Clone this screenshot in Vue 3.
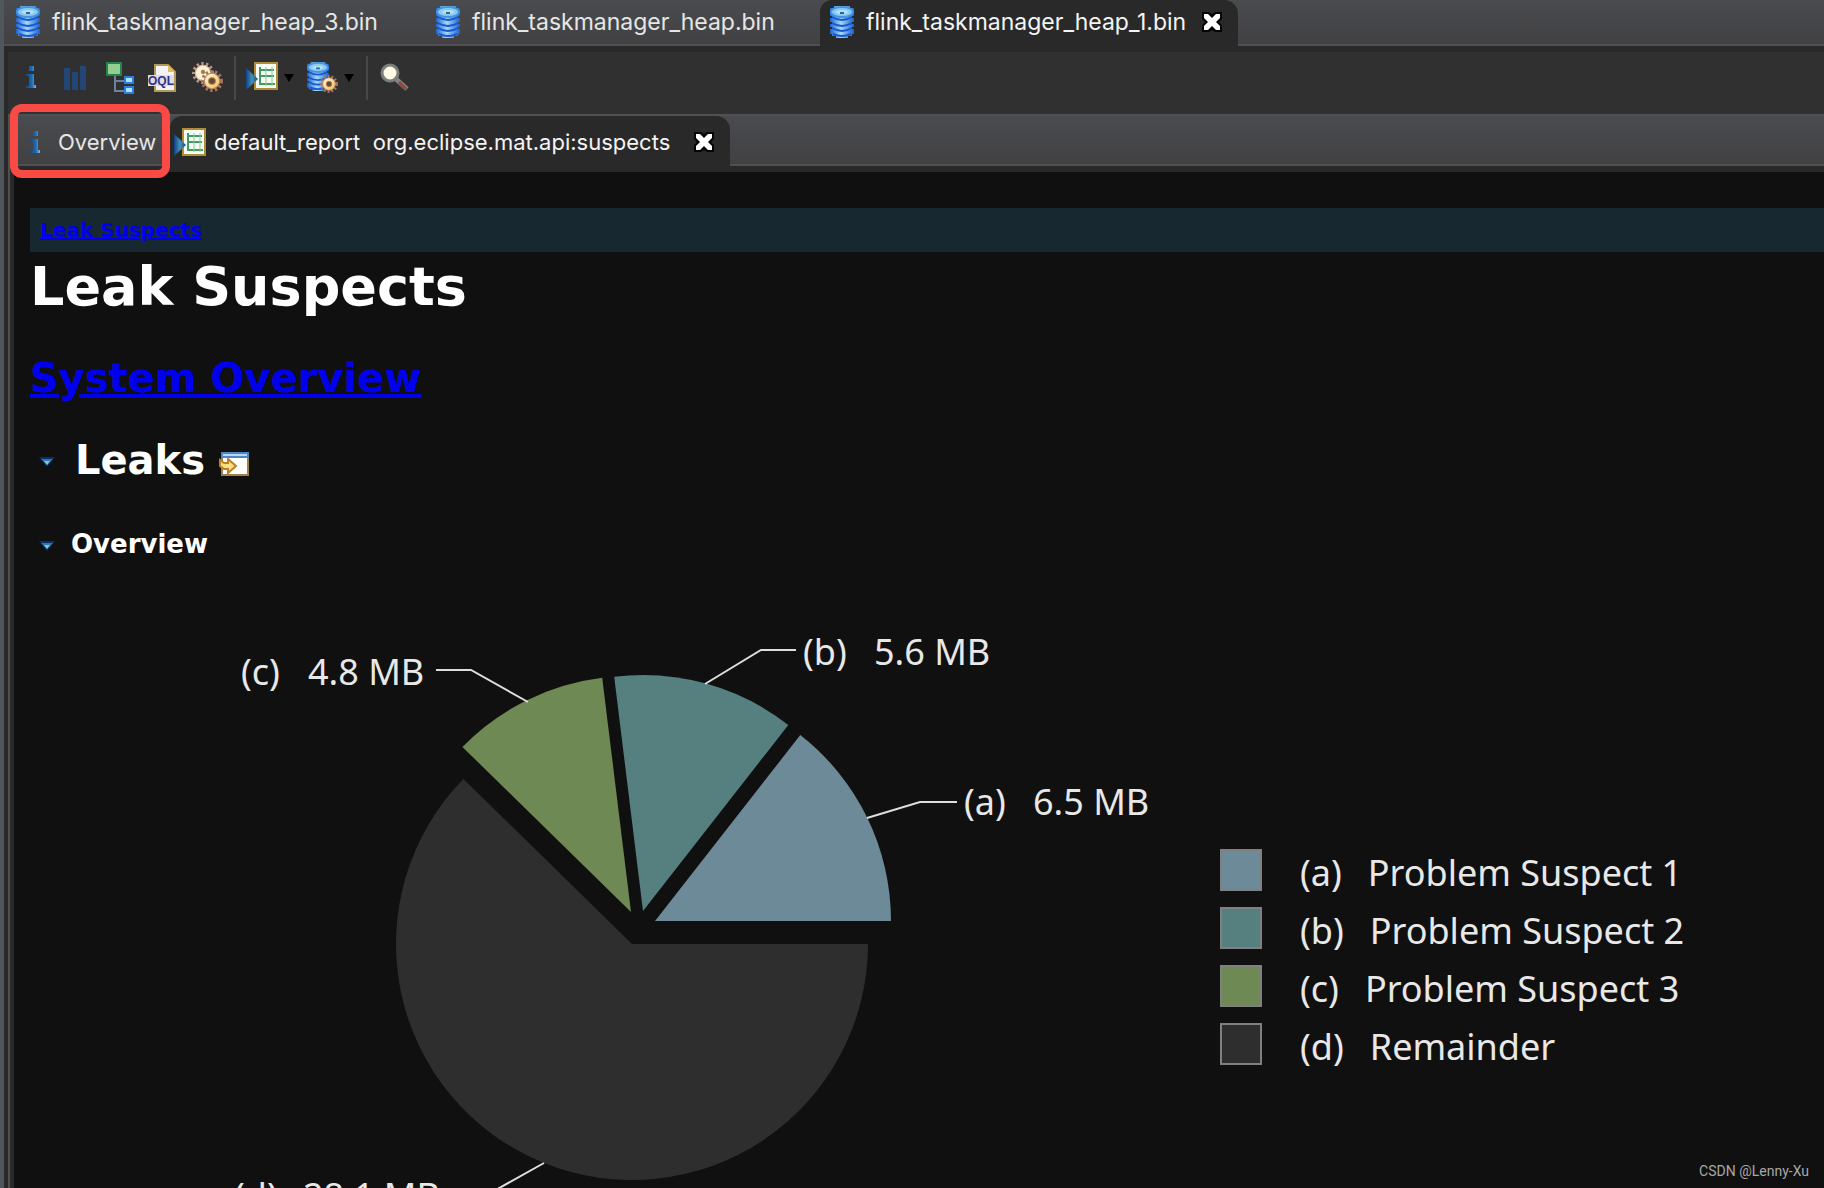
<script setup>
import { ref } from 'vue'

const editorTabs = [
  { title: 'flink_taskmanager_heap_3.bin', active: false },
  { title: 'flink_taskmanager_heap.bin', active: false },
  { title: 'flink_taskmanager_heap_1.bin', active: true },
]

const radius = 236

// Angles are in degrees, counter-clockwise from three o'clock.
const slices = [
  { key: '(a)', size: '6.5 MB', name: 'Problem Suspect 1', color: '#6c8a97', x: 625, y: 321, from: 0, to: 52, line: '837,218 890,202 927,202', kx: 934, vx: 1003, ty: 215 },
  { key: '(b)', size: '5.6 MB', name: 'Problem Suspect 2', color: '#568080', x: 613, y: 311, from: 52, to: 97, line: '675,84 731,50 766,50', kx: 773, vx: 844, ty: 65 },
  { key: '(c)', size: '4.8 MB', name: 'Problem Suspect 3', color: '#6f8955', x: 601, y: 312, from: 97, to: 135.6, line: '406,70 441,70 498,102', kx: 211, vx: 278, ty: 85 },
  { key: '(d)', size: '28.1 MB', name: 'Remainder', color: '#2e2e2e', x: 602, y: 344, from: 135.6, to: 360, line: '514,563 455,596 420,596', kx: 204, vx: 273, ty: 609 },
]

function slicePath(s) {
  const point = (deg) => {
    const a = (deg * Math.PI) / 180
    return `${(s.x + radius * Math.cos(a)).toFixed(1)} ${(s.y - radius * Math.sin(a)).toFixed(1)}`
  }
  const large = s.to - s.from > 180 ? 1 : 0
  return `M${s.x} ${s.y}L${point(s.from)}A${radius} ${radius} 0 ${large} 0 ${point(s.to)}Z`
}

const leaksOpen = ref(true)
const overviewOpen = ref(true)
</script>

<template>
  <div class="window">
    <svg class="defs" width="0" height="0" aria-hidden="true">
      <defs>
        <linearGradient id="dbBody" x1="0" x2="1">
          <stop offset="0" stop-color="#1c62cc" /><stop offset=".45" stop-color="#a5daf6" /><stop offset="1" stop-color="#1b5fd0" />
        </linearGradient>
        <linearGradient id="gold" x1="0" y1="0" x2="1" y2="1">
          <stop offset="0" stop-color="#fffbe0" /><stop offset="1" stop-color="#eebb62" />
        </linearGradient>
        <linearGradient id="play" x1="0" x2="1">
          <stop offset="0" stop-color="#0f3f86" /><stop offset=".5" stop-color="#4593b5" /><stop offset="1" stop-color="#0c4a94" />
        </linearGradient>
        <linearGradient id="info" x1="0" x2="1">
          <stop offset="0" stop-color="#0a4a90" /><stop offset=".6" stop-color="#1a6cb4" /><stop offset="1" stop-color="#8ab4dc" />
        </linearGradient>
        <symbol id="db" viewBox="0 0 24 32">
          <path d="M4 0H20V2H24V10H22V12H24V16H22V18H24V21H22V23H24V28H22V30H18V32H6V30H2V28H0V23H2V21H0V18H2V16H0V12H2V10H0V2H4Z" fill="url(#dbBody)" />
          <path d="M2 11Q12 17 22 11M2 17Q12 23 22 17M2 22Q12 28 22 22M3 28Q12 32 21 28" fill="none" stroke="#1557d6" stroke-width="2" />
          <ellipse cx="12" cy="6" rx="11" ry="5" fill="#8ccaf0" stroke="#4295de" stroke-width="2" />
          <ellipse cx="12" cy="6" rx="6" ry="2" fill="#b5e0f4" />
          <path d="M10 6H14V8H10Z" fill="#28679b" />
        </symbol>
        <symbol id="gear" viewBox="0 0 20 20">
          <circle cx="10" cy="10" r="8" fill="none" stroke="#a97558" stroke-width="4" stroke-dasharray="2 2" />
          <circle cx="10" cy="10" r="7" fill="url(#gold)" stroke="#b98a6a" stroke-width="1" />
          <circle cx="10" cy="10" r="3" fill="#5a4a42" stroke="#b87828" stroke-width="1" />
        </symbol>
        <symbol id="backGear" viewBox="0 0 20 20">
          <circle cx="10" cy="10" r="8" fill="none" stroke="#bb9480" stroke-width="4" stroke-dasharray="2 2" />
          <circle cx="10" cy="10" r="7" fill="#fbf1d4" stroke="#d2b49c" stroke-width="1" />
          <circle cx="10" cy="9" r="2" fill="#a5804f" />
        </symbol>
        <symbol id="report" viewBox="0 0 32 28">
          <path d="M9 1H31V27H9Z" fill="#f6fbf4" stroke="#b08b38" stroke-width="2" />
          <path d="M14 5V22H29M14 8H28M14 14H28" fill="none" stroke="#3d9c62" stroke-width="2" />
          <path d="M20 5V24M26 5V24" stroke="#8fc79e" stroke-width="1" />
          <path d="M0 6L12 17L0 28Z" fill="url(#play)" />
        </symbol>
        <symbol id="infoMark" viewBox="0 0 10 22">
          <path d="M3 0H8V5H3ZM0 8H8V19H10V22H0V20H3V10H0Z" fill="url(#info)" />
        </symbol>
        <symbol id="close" viewBox="0 0 20 20">
          <path d="M0 0H7L10 2L13 0H20V7L17 10L20 13V20H13L10 18L7 20H0V13L3 10L0 7Z" fill="#050505" />
          <path d="M2 2H6L10 6L14 2H18V6L14 10L18 14V18H14L10 14L6 18H2V14L6 10L2 6Z" fill="#fff" />
        </symbol>
        <symbol id="twisty" viewBox="0 0 16 10">
          <path d="M0 0H16L8 10Z" fill="#06306c" /><path d="M2 2H14L8 8Z" fill="#2f7aa8" /><path d="M5 4H11L8 8Z" fill="#8ac4d0" />
        </symbol>
      </defs>
    </svg>

    <nav class="editor-tabs" aria-label="Editors">
      <div v-for="tab in editorTabs" :key="tab.title" class="editor-tab" :class="{ active: tab.active }">
        <button class="tab-title" type="button">
          <svg width="24" height="32"><use href="#db" /></svg>
          <span>{{ tab.title }}</span>
        </button>
        <button v-if="tab.active" class="close" type="button" aria-label="Close editor">
          <svg width="20" height="20"><use href="#close" /></svg>
        </button>
      </div>
    </nav>

    <div class="toolbar" role="toolbar">
      <div class="group">
        <button type="button" aria-label="Overview">
          <svg width="32" height="32"><use href="#infoMark" x="10" y="4" width="10" height="22" /></svg>
        </button>
        <button type="button" aria-label="Histogram">
          <svg width="32" height="32"><path d="M4 6h6v22H4zM12 10h6v18h-6zM20 4h6v24h-6z" fill="#234674" /></svg>
        </button>
        <button type="button" aria-label="Dominator tree">
          <svg width="32" height="32">
            <path d="M11 14V29H20M11 19H20" fill="none" stroke="#6e829e" stroke-width="2" />
            <path d="M3 1H17V13H3Z" fill="#93cf8f" stroke="#26834f" stroke-width="2" />
            <path d="M20 14H30V22H20ZM20 24H30V32H20Z" fill="#2c7de0" />
            <path d="M22 16H28V20H22ZM22 26H28V30H22Z" fill="#a8e4fc" />
          </svg>
        </button>
        <button type="button" aria-label="Object query language">
          <svg width="32" height="32">
            <path d="M7 3H20L27 10V29H7Z" fill="#f2f3f6" stroke="#b29a55" stroke-width="2" />
            <path d="M20 3V10H27Z" fill="#e5b95c" />
            <path d="M0 13H26V24H0Z" fill="#dcdde9" />
            <text class="oql" x="0" y="23">OQL</text>
          </svg>
        </button>
        <button type="button" aria-label="Thread overview">
          <svg width="32" height="32">
            <use href="#backGear" x="0" y="0" width="22" height="22" /><use href="#gear" x="9" y="8" width="22" height="22" />
          </svg>
        </button>
      </div>
      <div class="group split">
        <button type="button" aria-label="Run report">
          <svg width="32" height="32"><use href="#report" y="0" width="32" height="28" /></svg>
        </button>
        <button class="drop" type="button" aria-label="Report list">
          <svg width="10" height="8"><path d="M0 0H10L5 8Z" fill="#000" /></svg>
        </button>
        <button type="button" aria-label="Query browser">
          <svg width="32" height="32">
            <use href="#db" width="24" height="29" /><use href="#gear" x="14" y="13" width="18" height="18" />
          </svg>
        </button>
        <button class="drop" type="button" aria-label="Query list">
          <svg width="10" height="8"><path d="M0 0H10L5 8Z" fill="#000" /></svg>
        </button>
      </div>
      <div class="group">
        <button type="button" aria-label="Find object">
          <svg width="32" height="32">
            <path d="M16 17L27 27" stroke="#85808a" stroke-width="5" />
            <path d="M19 20L26 27" stroke="#8d4a34" stroke-width="3" />
            <circle cx="10" cy="11" r="8" fill="#fdfbe6" stroke="#7c7f78" stroke-width="3" />
          </svg>
        </button>
      </div>
    </div>

    <div class="pane">
      <nav class="page-tabs" aria-label="Pages">
        <div class="page-tab overview">
          <button class="tab-title" type="button">
            <svg width="10" height="22"><use href="#infoMark" /></svg>
            <span>Overview</span>
          </button>
          <span class="highlight"></span>
        </div>
        <div class="page-tab active">
          <button class="tab-title" type="button">
            <svg width="32" height="28"><use href="#report" /></svg>
            <span>default_report&nbsp; org.eclipse.mat.api:suspects</span>
          </button>
          <button class="close" type="button" aria-label="Close page">
            <svg width="20" height="20"><use href="#close" /></svg>
          </button>
        </div>
      </nav>

      <main class="report">
        <div class="crumbs"><a href="#leaks">Leak Suspects</a></div>
        <h1>Leak Suspects</h1>
        <h2><a href="#system">System Overview</a></h2>
        <h2 id="leaks" class="section">
          <button type="button" aria-label="Toggle leaks" :aria-expanded="leaksOpen" @click="leaksOpen = !leaksOpen">
            <svg width="16" height="10"><use href="#twisty" /></svg>
          </button>
          <span>Leaks</span>
          <a class="open" href="#window" aria-label="Open in window">
            <svg width="30" height="24">
              <path d="M3 1H29V23H3Z" fill="#fff" stroke="#9b8050" stroke-width="2" />
              <path d="M2 0H30V6H2Z" fill="#4c86c6" /><path d="M4 2H28V4H4Z" fill="#b8d8f2" />
              <path d="M1 8L5 11H9V7L17 14L9 21V17H5L1 14Z" fill="#f9df83" stroke="#bc8226" stroke-width="2" />
            </svg>
          </a>
        </h2>
        <template v-if="leaksOpen">
          <h3 class="section">
            <button type="button" aria-label="Toggle overview" :aria-expanded="overviewOpen" @click="overviewOpen = !overviewOpen">
              <svg width="16" height="10"><use href="#twisty" /></svg>
            </button>
            <span>Overview</span>
          </h3>
          <figure v-if="overviewOpen" class="chart">
            <svg class="pie" width="1190" height="640" viewBox="0 0 1190 640">
              <g v-for="s in slices" :key="s.key">
                <path :d="slicePath(s)" :fill="s.color" />
                <polyline :points="s.line" fill="none" stroke="#dedede" stroke-width="2" />
                <text :x="s.kx" :y="s.ty">{{ s.key }}</text>
                <text :x="s.vx" :y="s.ty">{{ s.size }}</text>
              </g>
            </svg>
            <ul class="legend">
              <li v-for="s in slices" :key="s.key">
                <span class="swatch" :style="{ background: s.color }"></span>
                <span class="key">{{ s.key }}</span>
                <span class="name">{{ s.name }}</span>
              </li>
            </ul>
          </figure>
        </template>
      </main>
    </div>
    <span class="watermark">CSDN @Lenny-Xu</span>
  </div>
</template>

<style>
body {
  margin: 0;
  background: #101010;
}
</style>

<style scoped>
.window {
  position: relative;
  display: flex;
  flex-direction: column;
  box-sizing: border-box;
  height: 100vh;
  overflow: hidden;
  border-left: 4px solid #50575c;
  background: #292929;
  color: #e6e6e6;
  font-family: Inter, "Liberation Sans", sans-serif;
  font-size: 22px;
}
.defs {
  position: absolute;
}
button {
  display: flex;
  align-items: center;
  padding: 0;
  border: 0;
  background: none;
  color: inherit;
  font: inherit;
}
svg {
  display: block;
  flex: none;
}
.editor-tabs,
.page-tabs {
  display: flex;
  flex: none;
  box-sizing: border-box;
  background: linear-gradient(#4a4b4e, #414144);
}
.editor-tabs {
  height: 46px;
  border-bottom: 2px solid #505052;
  font-size: 23px;
}
.editor-tab {
  display: flex;
  box-sizing: border-box;
  flex: none;
  align-items: center;
  width: 420px;
  height: 44px;
  padding-left: 12px;
}
.editor-tab + .editor-tab {
  width: 396px;
}
.editor-tab + .editor-tab.active {
  width: 418px;
  height: 46px;
  padding: 0 16px 2px 10px;
  justify-content: space-between;
}
.active {
  border-radius: 12px 14px 0 0;
  background: #292929;
  color: #f4f4f4;
}
.tab-title {
  gap: 12px;
  white-space: nowrap;
}
.toolbar {
  display: flex;
  flex: none;
  margin: 6px 0 0 4px;
  padding: 4px 8px 14px;
  background: #303030;
}
.group {
  display: flex;
  align-items: center;
  gap: 12px;
  height: 44px;
}
.group.split {
  gap: 6px;
  margin: 0 12px 0 10px;
  padding: 0 12px 0 10px;
  border-left: 2px solid #484848;
  border-right: 2px solid #484848;
}
.drop {
  margin-right: 6px;
}
.drop:last-child {
  margin-right: 0;
}
.oql {
  fill: #38307e;
  font-family: "Liberation Sans", Arial, sans-serif;
  font-size: 12px;
  font-weight: bold;
}
.pane {
  flex: 1;
  min-height: 0;
  margin-left: 4px;
  border-left: 2px solid #505052;
}
.page-tabs {
  height: 52px;
  border-top: 2px solid #505054;
  border-bottom: 2px solid #505052;
}
.page-tab {
  position: relative;
  display: flex;
  box-sizing: border-box;
  align-items: center;
  height: 50px;
  padding: 2px 16px 0 20px;
}
.page-tab.overview {
  width: 160px;
}
.overview .tab-title {
  gap: 18px;
}
.page-tab.active {
  width: 560px;
  padding: 2px 16px 0 4px;
  justify-content: space-between;
}
.page-tab.active .tab-title {
  gap: 8px;
}
.highlight {
  position: absolute;
  z-index: 1;
  box-sizing: border-box;
  top: -12px;
  left: 0;
  width: 160px;
  height: 74px;
  border: 8px solid #fa4a46;
  border-radius: 12px;
}
.report {
  margin: 6px 0 0 4px;
  padding: 36px 0 0 16px;
  background: #101010;
  color: #fff;
  font-family: Verdana, "DejaVu Sans", sans-serif;
}
.report a {
  color: #0000ee;
}
.crumbs {
  padding-left: 10px;
  background: #182830;
  font-size: 20px;
  font-weight: bold;
  line-height: 44px;
}
h1,
h2,
h3 {
  margin: 0;
  font-weight: bold;
}
h1 {
  font-size: 54px;
  line-height: 70px;
}
h2 {
  margin-top: 34px;
  font-size: 40px;
  line-height: 48px;
}
h1 + h2 {
  margin-top: 32px;
}
h3 {
  margin-top: 44px;
  font-size: 26px;
  line-height: 32px;
}
.section {
  display: flex;
  align-items: center;
  padding-left: 9px;
}
.section button {
  margin: 4px 16px 0 0;
}
h2.section button {
  margin-right: 20px;
}
.section .open {
  margin: 8px 0 0 14px;
}
.chart {
  display: flex;
  margin: 40px 0 0;
}
.pie text {
  fill: #e8e8e8;
}
.pie text,
.legend {
  font-family: "Lucida Grande", "Noto Sans", sans-serif;
  font-size: 36px;
}
.legend {
  display: flex;
  flex-direction: column;
  gap: 16px;
  margin: 249px 0 0;
  padding: 0;
  color: #e8e8e8;
  line-height: 42px;
  list-style: none;
  white-space: nowrap;
}
.legend li {
  display: flex;
  height: 42px;
}
.swatch {
  box-sizing: border-box;
  width: 42px;
  height: 42px;
  margin-right: 38px;
  border: 2px solid #808080;
}
.key,
.name {
  padding-top: 3px;
}
.key {
  margin-right: 26px;
}
.watermark {
  position: absolute;
  right: 15px;
  bottom: 9px;
  color: #a8a8a8;
  font-family: Roboto, "Liberation Sans", sans-serif;
  font-size: 14px;
}
</style>
